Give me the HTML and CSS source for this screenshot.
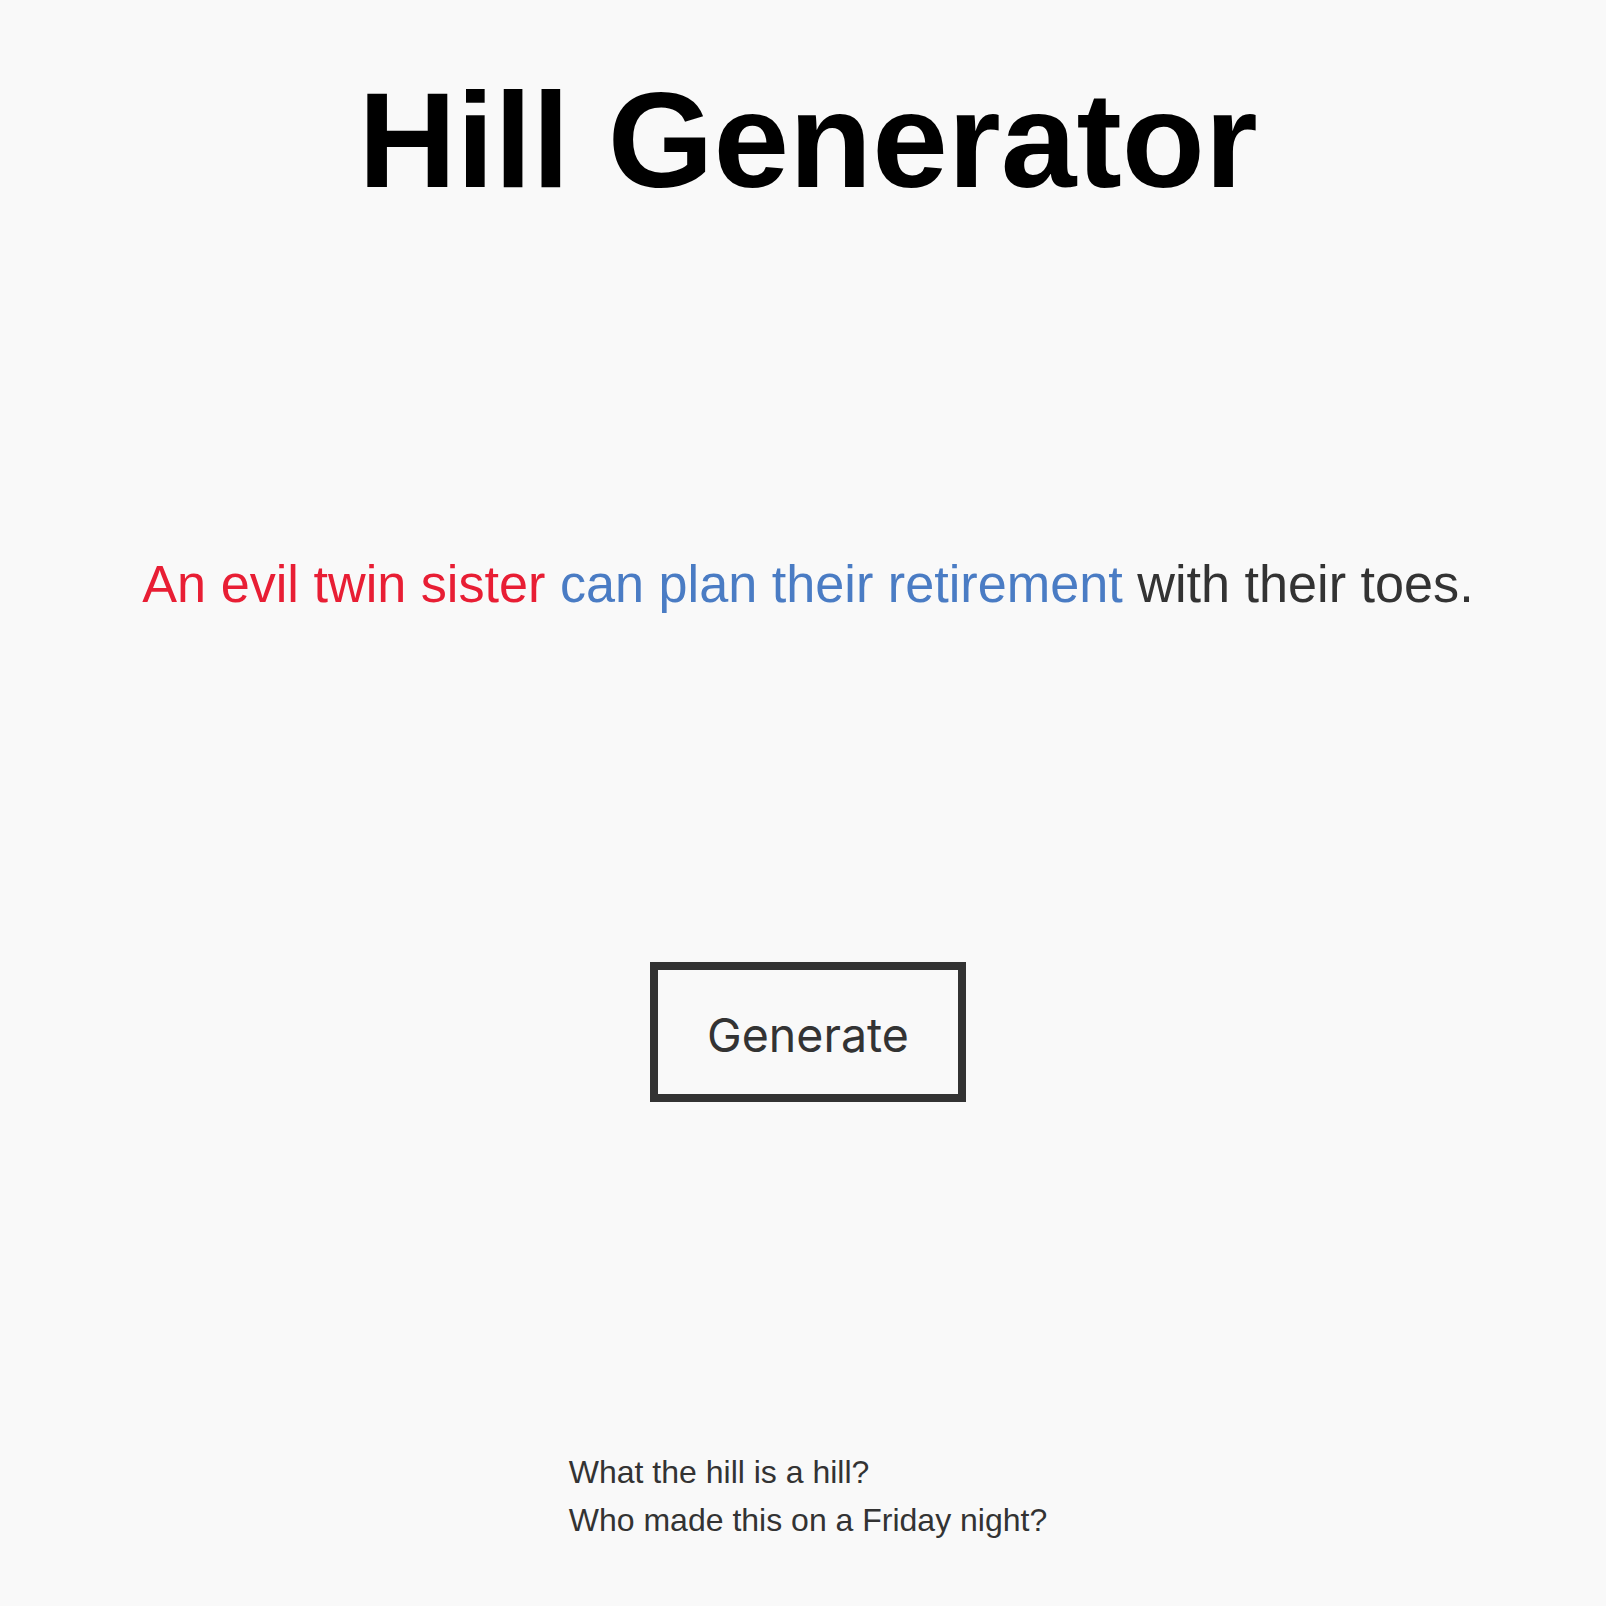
FILE: index.html
```html
<!DOCTYPE html>
<html lang="en">
<head>
<meta charset="utf-8">
<title>Hill Generator</title>
<link rel="stylesheet" href="styles.css">
</head>
<body>
<main class="page">
  <h1 class="title">Hill Generator</h1>
  <p class="sentence"><span class="subject">An evil twin sister</span> <span class="verb">can plan their retirement</span> <span class="rest">with their toes.</span></p>
  <button class="generate" type="button">Generate</button>
  <footer class="footer">
    <div class="footer-line">What the hill is a hill?</div>
    <div class="footer-line">Who made this on a Friday night?</div>
  </footer>
</main>
</body>
</html>
```
FILE: styles.css
```css
html, body {
  margin: 0;
  padding: 0;
  background: #f9f9f9;
}

.page {
  display: flex;
  flex-direction: column;
  align-items: center;
  padding-left: 10px;
  font-family: "Liberation Sans", Arial, sans-serif;
  color: #333333;
}

.title {
  margin: 72px 0 0;
  font-size: 136px;
  line-height: 1;
  font-weight: 700;
  color: #000000;
}

.sentence {
  margin: 350px 0 0;
  font-size: 52.2px;
  line-height: 1;
  white-space: nowrap;
}

.subject { color: #e81e34; }
.verb { color: #4a7cc4; }
.rest { color: #333333; }

.generate {
  margin-top: 352px;
  box-sizing: border-box;
  width: 316px;
  height: 140px;
  padding: 6px 0 0;
  border: 8px solid #333333;
  background: transparent;
  font-family: Inter, "Liberation Sans", sans-serif;
  font-size: 46.5px;
  line-height: 1;
  color: #333333;
  cursor: pointer;
}

.footer {
  margin-top: 346px;
  font-size: 32px;
  line-height: 48px;
  color: #333333;
  text-align: left;
}
```
